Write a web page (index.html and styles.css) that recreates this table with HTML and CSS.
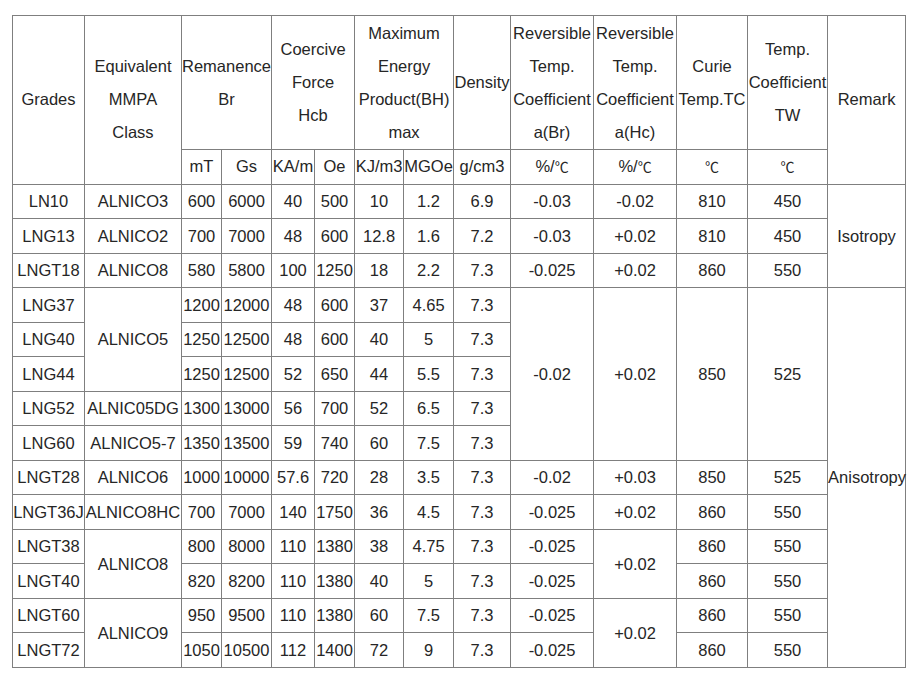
FILE: index.html
```html
<!DOCTYPE html>
<html>
<head>
<meta charset="utf-8">
<link rel="stylesheet" href="styles.css">
</head>
<body>
<div class="page">
<table class="spec">
<colgroup>
<col class="c72"><col class="c97"><col class="c40"><col class="c50"><col class="c43"><col class="c40"><col class="c49"><col class="c50"><col class="c57"><col class="c83"><col class="c83"><col class="c71"><col class="c80"><col class="c78">
</colgroup>
<thead>
<tr class="h1">
<th rowspan="2">Grades</th>
<th rowspan="2">Equivalent<br>MMPA<br>Class</th>
<th colspan="2">Remanence<br>Br</th>
<th colspan="2">Coercive<br>Force<br>Hcb</th>
<th colspan="2">Maximum<br>Energy<br>Product(BH)<br>max</th>
<th>Density</th>
<th>Reversible<br>Temp.<br>Coefficient<br>a(Br)</th>
<th>Reversible<br>Temp.<br>Coefficient<br>a(Hc)</th>
<th>Curie<br>Temp.TC</th>
<th>Temp.<br>Coefficient<br>TW</th>
<th rowspan="2">Remark</th>
</tr>
<tr class="h2">
<th>mT</th><th>Gs</th><th>KA/m</th><th>Oe</th><th>KJ/m3</th><th>MGOe</th><th>g/cm3</th>
<th>%/<span class="deg">℃</span></th><th>%/<span class="deg">℃</span></th><th><span class="deg">℃</span></th><th><span class="deg">℃</span></th>
</tr>
</thead>
<tbody>
<tr><td>LN10</td><td>ALNICO3</td><td>600</td><td>6000</td><td>40</td><td>500</td><td>10</td><td>1.2</td><td>6.9</td><td>-0.03</td><td>-0.02</td><td>810</td><td>450</td><td rowspan="3">Isotropy</td></tr>
<tr><td>LNG13</td><td>ALNICO2</td><td>700</td><td>7000</td><td>48</td><td>600</td><td>12.8</td><td>1.6</td><td>7.2</td><td>-0.03</td><td>+0.02</td><td>810</td><td>450</td></tr>
<tr><td>LNGT18</td><td>ALNICO8</td><td>580</td><td>5800</td><td>100</td><td>1250</td><td>18</td><td>2.2</td><td>7.3</td><td>-0.025</td><td>+0.02</td><td>860</td><td>550</td></tr>
<tr><td>LNG37</td><td rowspan="3">ALNICO5</td><td>1200</td><td>12000</td><td>48</td><td>600</td><td>37</td><td>4.65</td><td>7.3</td><td rowspan="5">-0.02</td><td rowspan="5">+0.02</td><td rowspan="5">850</td><td rowspan="5">525</td><td rowspan="11">Anisotropy</td></tr>
<tr><td>LNG40</td><td>1250</td><td>12500</td><td>48</td><td>600</td><td>40</td><td>5</td><td>7.3</td></tr>
<tr><td>LNG44</td><td>1250</td><td>12500</td><td>52</td><td>650</td><td>44</td><td>5.5</td><td>7.3</td></tr>
<tr><td>LNG52</td><td>ALNIC05DG</td><td>1300</td><td>13000</td><td>56</td><td>700</td><td>52</td><td>6.5</td><td>7.3</td></tr>
<tr><td>LNG60</td><td>ALNICO5-7</td><td>1350</td><td>13500</td><td>59</td><td>740</td><td>60</td><td>7.5</td><td>7.3</td></tr>
<tr><td>LNGT28</td><td>ALNICO6</td><td>1000</td><td>10000</td><td>57.6</td><td>720</td><td>28</td><td>3.5</td><td>7.3</td><td>-0.02</td><td>+0.03</td><td>850</td><td>525</td></tr>
<tr><td>LNGT36J</td><td>ALNICO8HC</td><td>700</td><td>7000</td><td>140</td><td>1750</td><td>36</td><td>4.5</td><td>7.3</td><td>-0.025</td><td>+0.02</td><td>860</td><td>550</td></tr>
<tr><td>LNGT38</td><td rowspan="2">ALNICO8</td><td>800</td><td>8000</td><td>110</td><td>1380</td><td>38</td><td>4.75</td><td>7.3</td><td>-0.025</td><td rowspan="2">+0.02</td><td>860</td><td>550</td></tr>
<tr><td>LNGT40</td><td>820</td><td>8200</td><td>110</td><td>1380</td><td>40</td><td>5</td><td>7.3</td><td>-0.025</td><td>860</td><td>550</td></tr>
<tr><td>LNGT60</td><td rowspan="2">ALNICO9</td><td>950</td><td>9500</td><td>110</td><td>1380</td><td>60</td><td>7.5</td><td>7.3</td><td>-0.025</td><td rowspan="2">+0.02</td><td>860</td><td>550</td></tr>
<tr><td>LNGT72</td><td>1050</td><td>10500</td><td>112</td><td>1400</td><td>72</td><td>9</td><td>7.3</td><td>-0.025</td><td>860</td><td>550</td></tr>
</tbody>
</table>
</div>
</body>
</html>
```

FILE: styles.css
```css
html, body {
  margin: 0;
  padding: 0;
  background: #ffffff;
}

.page {
  padding: 15px 0 0 12px;
}

.spec {
  border-collapse: collapse;
  table-layout: fixed;
  width: 894px;
  font-family: "Liberation Sans", Arial, sans-serif;
  font-size: 16.5px;
  color: #262626;
}

.spec th,
.spec td {
  border: 1px solid #7f7f7f;
  padding: 0;
  text-align: center;
  vertical-align: middle;
  white-space: nowrap;
  font-weight: normal;
  overflow: visible;
}

.spec th {
  line-height: 33px;
}

.spec td {
  line-height: 20px;
}

.spec .h1 { height: 134px; }
.spec .h2 { height: 34.5px; }
.spec tbody tr { height: 34.5px; }

.deg {
  font-family: "Noto Sans CJK SC", sans-serif;
  font-size: 14px;
}

.c72 { width: 72px; }
.c97 { width: 97px; }
.c40 { width: 40px; }
.c50 { width: 50px; }
.c43 { width: 43px; }
.c49 { width: 49px; }
.c57 { width: 57px; }
.c83 { width: 83px; }
.c71 { width: 71px; }
.c80 { width: 80px; }
.c78 { width: 78px; }
```
